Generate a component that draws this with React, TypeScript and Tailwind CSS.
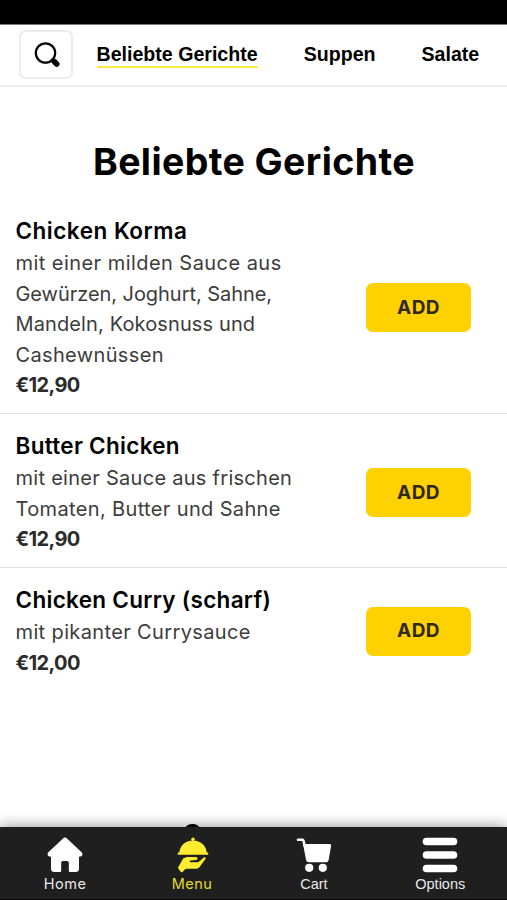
import { useState } from "react";

interface Dish {
  name: string;
  nameClass: string;
  lines: { text: string; className: string }[];
  price: string;
}

const categories = ["Beliebte Gerichte", "Suppen", "Salate"];

const dishes: Dish[] = [
  {
    name: "Chicken Korma",
    nameClass: "tracking-[0.5px]",
    lines: [
      { text: "mit einer milden Sauce aus", className: "tracking-[0.45px]" },
      { text: "Gewürzen, Joghurt, Sahne,", className: "tracking-[-0.05px]" },
      { text: "Mandeln, Kokosnuss und", className: "tracking-[0.12px]" },
      { text: "Cashewnüssen", className: "tracking-[0.35px]" },
    ],
    price: "€12,90",
  },
  {
    name: "Butter Chicken",
    nameClass: "tracking-[0.3px]",
    lines: [
      { text: "mit einer Sauce aus frischen", className: "tracking-[0.28px]" },
      { text: "Tomaten, Butter und Sahne", className: "tracking-[0.36px]" },
    ],
    price: "€12,90",
  },
  {
    name: "Chicken Curry (scharf)",
    nameClass: "tracking-[0.3px]",
    lines: [{ text: "mit pikanter Currysauce", className: "tracking-[0.37px]" }],
    price: "€12,00",
  },
];

function SearchIcon() {
  return (
    <svg width="28" height="28" viewBox="0 0 28 28" fill="none" stroke="#050505" strokeLinecap="round">
      <circle cx="12.500" cy="12" r="9.700" strokeWidth="2.200" />
      <path d="M19.300 18.900l1.800 1.800" strokeWidth="3" />
      <path d="M21.300 20.600l2.400 2.400" strokeWidth="5.600" />
    </svg>
  );
}

function HomeIcon() {
  return (
    <svg className="ml-0.5" width="36" height="36" viewBox="0 0 36 36" fill="currentColor">
      <path d="M15.700 1.700a3.300 3.300 0 0 1 4.600 0L34.600 15.300c1.500 1.500 .9 4-1.300 4.200L32 19.700V31.500a3.500 3.500 0 0 1-3.500 3.500H23a1.200 1.200 0 0 1-1.200-1.200V26c0-1.300-.7-2-2-2h-3.600c-1.300 0-2 .7-2 2v7.800A1.200 1.200 0 0 1 13 35H7.500A3.500 3.500 0 0 1 4 31.500V19.700l-1.300-.2c-2.200-.2-2.800-2.700-1.300-4.200z" />
    </svg>
  );
}

function MenuIcon() {
  return (
    <svg className="ml-1" width="32" height="36" viewBox="0 0 32 36" fill="currentColor">
      <circle cx="16" cy="2.200" r="1.700" />
      <path d="M2.200 16C2.700 8.600 8.300 3.400 16 3.400S29.300 8.600 29.800 16z" />
      <rect x="0.700" y="15.600" width="30.600" height="2.100" rx="0.700" />
      <path d="M6.200 21.600C7.700 20.500 9.200 20 11 20h7.600c2.400 0 2.500 2.700.5 3.100l-5.500.5c-1.200.2-1.100 1.700.1 1.700h5.800c1.400 0 2.300-.4 3.300-1.300l4-3.400c1.400-1 2.500.2 1.600 1.500l-5.600 7.700c-1 1.300-2 1.900-3.700 1.900h-8.600c-1.400 0-2.300.3-3.200 1.300l-1.700 1.900c-.6.6-1.200.6-1.700 0l-2.600-3.400c-.4-.5-.4-1 0-1.500z" />
    </svg>
  );
}

function CartIcon() {
  return (
    <svg width="36" height="36" viewBox="0 0 36 36" fill="currentColor">
      <path d="M2 2.800h4.200c.8 0 1.200.4 1.400 1.200l1 4.500" fill="none" stroke="currentColor" strokeWidth="2.600" strokeLinecap="round" />
      <path d="M7 7h26.500c1.200 0 1.800.8 1.600 1.900L32.700 22.700c-.3 1.700-1.300 2.600-3 2.600H13c-1.600 0-2.600-.8-3-2.500z" />
      <circle cx="13.200" cy="30.800" r="4.100" />
      <circle cx="26.800" cy="30.800" r="4.100" />
    </svg>
  );
}

function OptionsIcon() {
  return (
    <svg width="36" height="36" viewBox="0 0 36 36" fill="currentColor">
      <rect x="0.700" y="0.700" width="34.600" height="7.600" rx="3.800" />
      <rect x="0.700" y="14.200" width="34.600" height="7.600" rx="3.800" />
      <rect x="0.700" y="27.700" width="34.600" height="7.600" rx="3.800" />
    </svg>
  );
}

const tabs = [
  { label: "Home", icon: HomeIcon, labelClass: "pl-0.5 font-['Inter',sans-serif] text-[14.500px] tracking-[0.5px]" },
  { label: "Menu", icon: MenuIcon, labelClass: "pl-0.5 font-['Inter',sans-serif] text-[14.500px] tracking-[0.5px]" },
  { label: "Cart", icon: CartIcon, labelClass: "font-['Liberation_Sans',sans-serif] text-[14.500px]" },
  { label: "Options", icon: OptionsIcon, labelClass: "font-['Liberation_Sans',sans-serif] text-[14.500px]" },
];

export default function App() {
  const [category, setCategory] = useState(categories[0]);
  const [tab, setTab] = useState("Menu");

  return (
    <div className="flex h-[900px] w-[507px] flex-col overflow-hidden bg-white font-['Inter',sans-serif] text-black">
      <div className="h-[25px] shrink-0 border-b border-[#777] bg-black" />

      <header className="flex h-[62px] shrink-0 items-start border-b-2 border-[#eeeeee] pl-[19px] pt-[5px]">
        <button className="flex h-[49px] w-[54px] items-center justify-center rounded-[7px] border-2 border-[#ececec] pl-[2px]">
          <SearchIcon />
        </button>
        <nav className="ml-[23.500px] flex gap-[46px] whitespace-nowrap pt-[13px] font-['Liberation_Sans',sans-serif] text-[19.600px] font-bold leading-[23px]">
          {categories.map((c) => (
            <button
              key={c}
              onClick={() => setCategory(c)}
              className={c === category ? "border-b-2 border-[#fdec3c]" : "border-b-2 border-transparent"}
            >
              {c}
            </button>
          ))}
        </nav>
      </header>

      <main className="flex-1">
        <h1 className="pl-px pt-[47px] text-center text-[37.500px] font-bold leading-[56px]">
          <span className="tracking-[0.4px]">Beliebte Gerichte</span>
        </h1>
        <div className="mt-[9px]">
          {dishes.map((dish, i) => (
            <section
              key={dish.name}
              className={`flex items-center justify-between pb-[12.500px] pl-[15.500px] pr-9 pt-[14px] ${i < dishes.length - 1 ? "border-b border-[#e2e2e2]" : ""}`}
            >
              <div className="whitespace-nowrap text-[20px] leading-[30.500px] text-[#3c3c3c]">
                <h2 className="text-[22.500px] font-semibold leading-[35px] text-black">
                  <span className={dish.nameClass}>{dish.name}</span>
                </h2>
                {dish.lines.map((line) => (
                  <p key={line.text}>
                    <span className={line.className}>{line.text}</span>
                  </p>
                ))}
                <p className="font-bold text-[#2b2b2b]">
                  <span className="tracking-[-0.6px]">{dish.price}</span>
                </p>
              </div>
              <button className="mt-[2px] h-[49px] w-[105px] rounded-[7px] bg-[#ffd100] pt-px text-[19px] font-bold tracking-[0.4px] text-[#2f2a16]">
                ADD
              </button>
            </section>
          ))}
        </div>
      </main>

      {/* top of the next category image, cut off by the tab bar */}
      <div className="flex h-[3px] shrink-0 overflow-hidden pl-[184px]">
        <div className="h-[16px] w-[17px] shrink-0 rounded-full bg-black" />
      </div>

      <footer className="flex h-[73px] shrink-0 justify-around border-b border-[#100508] bg-[#1f1f1f] pt-[10px] shadow-[0_0_14px_rgba(0,0,0,0.45)]">
        {tabs.map(({ label, icon: Icon, labelClass }) => (
          <button
            key={label}
            onClick={() => setTab(label)}
            className={`flex flex-col items-center ${tab === label ? "text-[#fdec2f]" : "text-white"}`}
          >
            <Icon />
            <span className={`leading-[22px] opacity-90 ${labelClass}`}>{label}</span>
          </button>
        ))}
      </footer>
    </div>
  );
}
